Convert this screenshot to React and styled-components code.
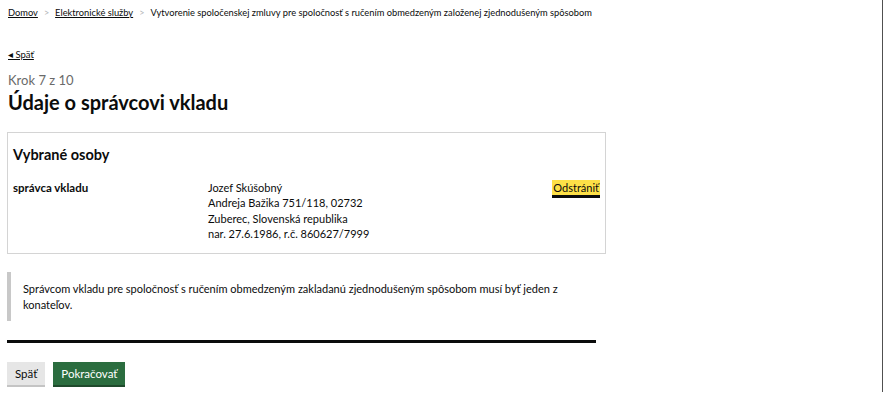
import React from "react";
import styled, { createGlobalStyle } from "styled-components";

const GlobalStyle = createGlobalStyle`
  html, body {
    margin: 0;
    padding: 0;
    background: #fff;
  }
  body {
    font-family: Lato, "Noto Sans", sans-serif;
    color: #0b0c0c;
  }
`;

const Page = styled.div`
  width: 883px;
  height: 392px;
  border-right: 1px solid #505050;
  box-sizing: border-box;
  padding: 6px 0 0 8px;
`;

const Breadcrumbs = styled.nav`
  display: flex;
  align-items: center;
  font-size: 9.3px;
  line-height: 14px;
  white-space: nowrap;
`;

const Crumb = styled.a`
  color: #0b0c0c;
  text-decoration: underline;
`;

const Chevron = styled.span`
  color: #b1b4b6;
  margin: 0 6px;
  font-size: 9px;
`;

const CurrentCrumb = styled.span`
  color: #0b0c0c;
`;

const BackLink = styled.a`
  display: inline-block;
  margin-top: 28px;
  font-size: 9.5px;
  line-height: 13px;
  color: #0b0c0c;
  text-decoration: underline;
`;

const Caption = styled.div`
  margin-top: 11px;
  font-size: 13px;
  line-height: 17px;
  color: #6a6a6a;
`;

const Heading = styled.h1`
  margin: 0;
  font-size: 20px;
  line-height: 26px;
  font-weight: 700;
`;

const Card = styled.section`
  margin-top: 17px;
  margin-left: -1px;
  width: 599px;
  box-sizing: border-box;
  border: 1px solid #d4d4d4;
  padding: 13px 5px 12px 5px;
`;

const CardTitle = styled.h2`
  margin: 0 0 16px;
  font-size: 14.5px;
  line-height: 18px;
  font-weight: 700;
`;

const PersonRow = styled.div`
  display: grid;
  grid-template-columns: 195px 1fr auto;
  font-size: 11px;
  line-height: 15.3px;
`;

const RoleLabel = styled.div`
  font-weight: 700;
  font-size: 11.5px;
`;

const PersonInfo = styled.div``;

const RemoveLink = styled.a`
  align-self: start;
  padding: 0 1px;
  height: 15px;
  background: #fde047;
  color: #0b0c0c;
  text-decoration: none;
  box-shadow: 0 3px #0b0c0c;
`;

const InsetText = styled.div`
  margin-top: 18px;
  margin-left: -1px;
  width: 560px;
  border-left: 4px solid #c8c8c8;
  padding: 9px 0 8px 12px;
  font-size: 11px;
  line-height: 16px;
`;

const SectionBreak = styled.hr`
  margin: 19px 0 0 -1px;
  width: 589px;
  height: 3px;
  border: 0;
  background: #0b0c0c;
`;

const Actions = styled.div`
  display: flex;
  gap: 8px;
  margin-top: 19px;
  margin-left: -1px;
`;

const Button = styled.button`
  font-family: inherit;
  font-size: 11.5px;
  height: 23px;
  padding: 0 8px;
  border: 0;
  border-radius: 0;
  cursor: pointer;
  background: ${(p) => (p.$primary ? "#2b6d3f" : "#e6e6e6")};
  color: ${(p) => (p.$primary ? "#ffffff" : "#0b0c0c")};
  box-shadow: 0 2px 0 ${(p) => (p.$primary ? "#1f4a2c" : "#c4c4c4")};
`;

const person = [
  "Jozef Skúšobný",
  "Andreja Bažika 751/118, 02732",
  "Zuberec, Slovenská republika",
  "nar. 27.6.1986, r.č. 860627/7999",
];

export default function App() {
  return (
    <>
      <GlobalStyle />
      <Page>
        <Breadcrumbs>
          <Crumb href="#">Domov</Crumb>
          <Chevron>&gt;</Chevron>
          <Crumb href="#">Elektronické služby</Crumb>
          <Chevron>&gt;</Chevron>
          <CurrentCrumb>
            Vytvorenie spoločenskej zmluvy pre spoločnosť s ručením obmedzeným založenej zjednodušeným spôsobom
          </CurrentCrumb>
        </Breadcrumbs>

        <BackLink href="#">◂ Späť</BackLink>
        <Caption>Krok 7 z 10</Caption>
        <Heading>Údaje o správcovi vkladu</Heading>

        <Card>
          <CardTitle>Vybrané osoby</CardTitle>
          <PersonRow>
            <RoleLabel>správca vkladu</RoleLabel>
            <PersonInfo>
              {person.map((line) => (
                <div key={line}>{line}</div>
              ))}
            </PersonInfo>
            <RemoveLink href="#">Odstrániť</RemoveLink>
          </PersonRow>
        </Card>

        <InsetText>
          Správcom vkladu pre spoločnosť s ručením obmedzeným zakladanú zjednodušeným spôsobom musí byť jeden z
          konateľov.
        </InsetText>

        <SectionBreak />

        <Actions>
          <Button>Späť</Button>
          <Button $primary>Pokračovať</Button>
        </Actions>
      </Page>
    </>
  );
}
